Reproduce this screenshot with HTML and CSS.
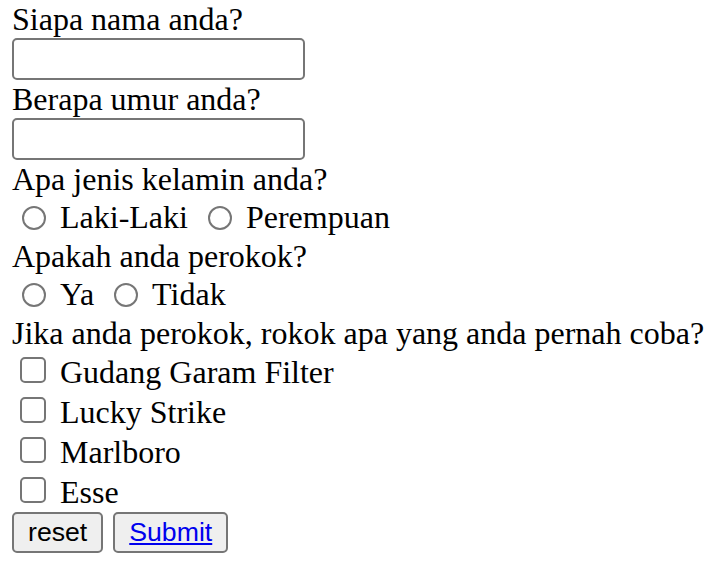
FILE: index.html
```html
<!DOCTYPE html>
<html lang="id">
<head>
<meta charset="utf-8">
<title>Form</title>
<link rel="stylesheet" href="styles.css">
</head>
<body>
<form class="form">
  <div class="q">Siapa nama anda?</div>
  <input class="text" type="text">
  <div class="q">Berapa umur anda?</div>
  <input class="text" type="text">
  <div class="q">Apa jenis kelamin anda?</div>
  <div class="choices">
    <label class="opt"><input class="radio" type="radio" name="jk">Laki-Laki</label>
    <label class="opt"><input class="radio" type="radio" name="jk">Perempuan</label>
  </div>
  <div class="q">Apakah anda perokok?</div>
  <div class="choices">
    <label class="opt"><input class="radio" type="radio" name="rokok">Ya</label>
    <label class="opt"><input class="radio" type="radio" name="rokok">Tidak</label>
  </div>
  <div class="q">Jika anda perokok, rokok apa yang anda pernah coba?</div>
  <label class="check-row"><input class="check" type="checkbox">Gudang Garam Filter</label>
  <label class="check-row"><input class="check" type="checkbox">Lucky Strike</label>
  <label class="check-row"><input class="check" type="checkbox">Marlboro</label>
  <label class="check-row"><input class="check" type="checkbox">Esse</label>
  <div class="buttons">
    <input class="btn" type="reset" value="reset">
    <button class="btn" type="button"><a class="link" href="#">Submit</a></button>
  </div>
</form>
</body>
</html>
```
FILE: styles.css
```css
html, body {
  background: #ffffff;
}
body {
  margin: 0;
  padding: 0 12px;
  font-family: "Liberation Serif", "Times New Roman", serif;
  font-size: 32px;
  color: #000000;
}
.form {
  display: flex;
  flex-direction: column;
  align-items: flex-start;
}
.q {
  height: 38px;
  line-height: 38px;
  white-space: nowrap;
}
.text {
  width: 293px;
  height: 42px;
  box-sizing: border-box;
  margin: 0;
  padding: 0 4px;
  border: 2px solid #767676;
  border-radius: 5px;
  background: #ffffff;
  font: inherit;
}
.choices {
  display: flex;
  gap: 10px;
  height: 39px;
}
.opt {
  display: flex;
  align-items: center;
  line-height: 39px;
  height: 39px;
}
.radio {
  appearance: none;
  -webkit-appearance: none;
  box-sizing: border-box;
  width: 24px;
  height: 24px;
  margin: 0 14px 0 10px;
  border: 2px solid #767676;
  border-radius: 50%;
  background: #ffffff;
}
.check-row {
  display: flex;
  align-items: flex-start;
  height: 40px;
  line-height: 40px;
}
.check {
  appearance: none;
  -webkit-appearance: none;
  box-sizing: border-box;
  width: 26px;
  height: 26px;
  margin: 5px 14px 0 8px;
  border: 2px solid #767676;
  border-radius: 5px;
  background: #ffffff;
}
.buttons {
  display: flex;
  gap: 10px;
}
.btn {
  height: 41px;
  box-sizing: border-box;
  margin: 0;
  padding: 0 14px;
  border: 2px solid #767676;
  border-radius: 5px;
  background: #efefef;
  color: #000000;
  font-family: "Liberation Sans", Arial, sans-serif;
  font-size: 26.67px;
}
.link {
  color: #0000ee;
  text-decoration: underline;
}
```
